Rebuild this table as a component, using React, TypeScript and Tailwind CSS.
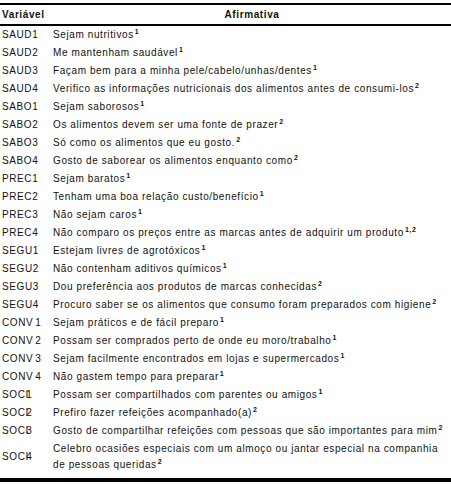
import React from "react";

const Sup = ({ children }: { children: React.ReactNode }) => (
  <span className="align-super text-[7px] leading-none font-bold ml-[1px]">{children}</span>
);

const rows: [React.ReactNode, React.ReactNode][] = [
  ["SAUD1", <>Sejam nutritivos<Sup>1</Sup></>],
  ["SAUD2", <>Me mantenham saudável<Sup>1</Sup></>],
  ["SAUD3", <>Façam bem para a minha pele/cabelo/unhas/dentes<Sup>1</Sup></>],
  ["SAUD4", <>Verifico as informações nutricionais dos alimentos antes de consumi-los<Sup>2</Sup></>],
  ["SABO1", <>Sejam saborosos<Sup>1</Sup></>],
  ["SABO2", <>Os alimentos devem ser uma fonte de prazer<Sup>2</Sup></>],
  ["SABO3", <>Só como os alimentos que eu gosto.<Sup>2</Sup></>],
  ["SABO4", <>Gosto de saborear os alimentos enquanto como<Sup>2</Sup></>],
  ["PREC1", <>Sejam baratos<Sup>1</Sup></>],
  ["PREC2", <>Tenham uma boa relação custo/benefício<Sup>1</Sup></>],
  ["PREC3", <>Não sejam caros<Sup>1</Sup></>],
  ["PREC4", <>Não comparo os preços entre as marcas antes de adquirir um produto<Sup>1,2</Sup></>],
  ["SEGU1", <>Estejam livres de agrotóxicos<Sup>1</Sup></>],
  ["SEGU2", <>Não contenham aditivos químicos<Sup>1</Sup></>],
  ["SEGU3", <>Dou preferência aos produtos de marcas conhecidas<Sup>2</Sup></>],
  ["SEGU4", <>Procuro saber se os alimentos que consumo foram preparados com higiene<Sup>2</Sup></>],
  [<>CONV<span className="ml-[2px]">1</span></>, <>Sejam práticos e de fácil preparo<Sup>1</Sup></>],
  [<>CONV<span className="ml-[2px]">2</span></>, <>Possam ser comprados perto de onde eu moro/trabalho<Sup>1</Sup></>],
  [<>CONV<span className="ml-[2px]">3</span></>, <>Sejam facilmente encontrados em lojas e supermercados<Sup>1</Sup></>],
  [<>CONV<span className="ml-[2px]">4</span></>, <>Não gastem tempo para preparar<Sup>1</Sup></>],
  [<>SOC<span className="tracking-[-2px]">I</span>1</>, <>Possam ser compartilhados com parentes ou amigos<Sup>1</Sup></>],
  [<>SOC<span className="tracking-[-2px]">I</span>2</>, <>Prefiro fazer refeições acompanhado(a)<Sup>2</Sup></>],
  [<>SOC<span className="tracking-[-2px]">I</span>3</>, <>Gosto de compartilhar refeições com pessoas que são importantes para mim<Sup>2</Sup></>],
];

export default function App() {
  return (
    <div
      className="w-[451px] h-[484px] bg-white pt-[3px] text-[#111] text-[10px] tracking-[0.6px]"
      style={{ fontFamily: '"Liberation Sans", Arial, sans-serif' }}
    >
      <div className="border-t-2 border-b-2 border-black grid grid-cols-[53px_1fr] h-[23px] items-center font-bold">
        <div className="pl-[2px]">Variável</div>
        <div className="text-center">Afirmativa</div>
      </div>
      <div className="border-b-[4px] border-black">
        {rows.map(([a, b], i) => (
          <div key={i} className="grid grid-cols-[53px_1fr] h-[18px] items-center leading-[12px]">
            <div className="pl-[2px]">{a}</div>
            <div className="whitespace-nowrap">{b}</div>
          </div>
        ))}
        <div className="grid grid-cols-[53px_1fr] h-[38px] items-start pt-[1px]">
          <div className="pl-[2px] leading-[32px]">
            SOC<span className="tracking-[-2px]">I</span>4
          </div>
          <div className="leading-[16px] whitespace-nowrap">
            Celebro ocasiões especiais com um almoço ou jantar especial na companhia
            <br />
            de pessoas queridas<Sup>2</Sup>
          </div>
        </div>
      </div>
    </div>
  );
}
